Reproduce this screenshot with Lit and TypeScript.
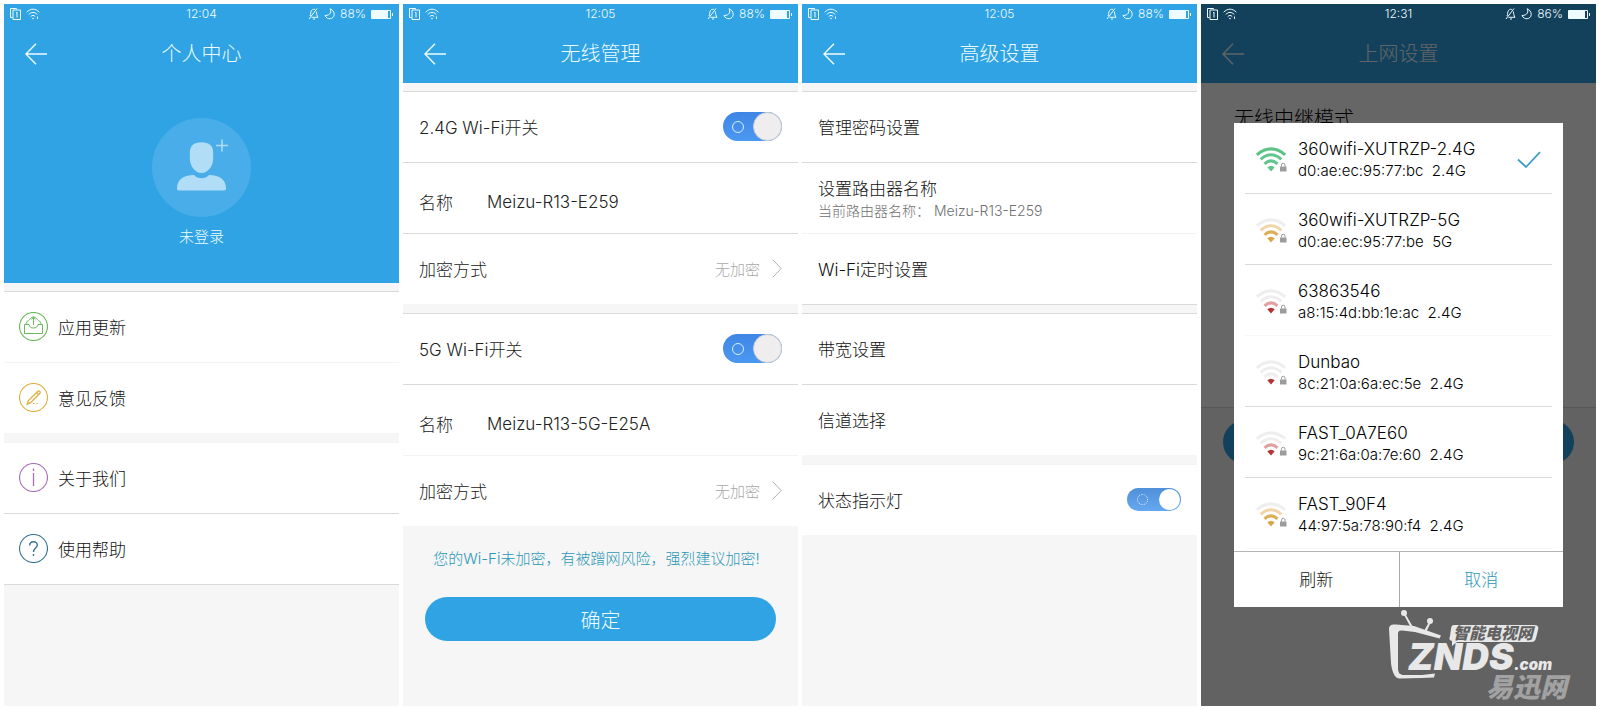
import { LitElement, html, svg, css, nothing, type TemplateResult } from "lit";
import { customElement, property } from "lit/decorators.js";
import { classMap } from "lit/directives/class-map.js";

const backArrow = svg`<path d="M11 .8 1 11l10 10.2M1 11h21" fill="none" stroke="currentColor" stroke-width="1.4"/>`;

@customElement("status-bar")
class StatusBar extends LitElement {
  @property() time = "";
  @property({ type: Number }) battery = 100;

  static styles = css`
    :host {
      display: grid;
      grid-template-columns: 1fr auto 1fr;
      align-items: center;
      height: 20px;
      padding: 0 6px 0 6px;
      font-size: 12px;
      line-height: 20px;
    }
    .side {
      display: flex;
      align-items: center;
      gap: 5px;
    }
    .right {
      justify-content: flex-end;
    }
    svg {
      display: block;
      fill: none;
      stroke: currentColor;
    }
  `;

  render() {
    return html`
      <div class="side">
        <svg width="11" height="12" viewBox="0 0 11 12" aria-hidden="true">
          <path d="M2.5 9.5h-2v-9h6v1M3 2h7.500v9.500H3zM6 5l1-.8V9.500" />
        </svg>
        <svg width="14" height="12" viewBox="0 0 14 12" aria-hidden="true">
          <path d="M.7 4.200C4.500.2 9.500.2 13.300 4.200M2.700 6.500C5.500 3.700 8.500 3.700 11.300 6.500M4.700 8.700C6.300 7 7.700 7 9.300 8.700" />
          <circle cx="7" cy="10.500" r=".8" fill="currentColor" stroke="none" />
          <path d="M11.500 8.500v2.500" />
        </svg>
      </div>
      <span>${this.time}</span>
      <div class="side right">
        <svg width="11" height="12" viewBox="0 0 11 12" aria-hidden="true">
          <path d="M9 .5 1 11M2 8C3 6.500 2.300 4 3.500 2.500S6 1.300 7 1.500M8.300 3.500C8.700 6 8.800 7.500 10 9.300H3.500M5 11h2" />
        </svg>
        <svg width="11" height="12" viewBox="0 0 11 12" aria-hidden="true">
          <path d="M6 .8c2 2.700.5 6.700-5 6.700C3 12.300 9.800 11.500 10.200 6.700 10.300 3.800 8.500 1.500 6 .8z" />
        </svg>
        <span>${this.battery}%</span>
        <svg width="22" height="9" viewBox="0 0 22 9" aria-hidden="true">
          <path d="M.5.500h19v8H.500zM21.500 3v3" />
          <path d="M1 1h16v7H1z" fill="currentColor" stroke="none" />
        </svg>
      </div>
    `;
  }
}

interface Network {
  name: string;
  mac: string;
  band: string;
  level: number;
}

const networks: Network[] = [
  { name: "360wifi-XUTRZP-2.4G", mac: "d0:ae:ec:95:77:bc", band: "2.4G", level: 4 },
  { name: "360wifi-XUTRZP-5G", mac: "d0:ae:ec:95:77:be", band: "5G", level: 3 },
  { name: "63863546", mac: "a8:15:4d:bb:1e:ac", band: "2.4G", level: 2 },
  { name: "Dunbao", mac: "8c:21:0a:6a:ec:5e", band: "2.4G", level: 1 },
  { name: "FAST_0A7E60", mac: "9c:21:6a:0a:7e:60", band: "2.4G", level: 2 },
  { name: "FAST_90F4", mac: "44:97:5a:78:90:f4", band: "2.4G", level: 3 },
];

/* Colours of the dot and of the three arcs, from the inside out. */
const signalColours: Record<number, string[]> = {
  1: ["#b23434", "#eeeeee", "#eeeeee", "#eeeeee"],
  2: ["#b23434", "#e0a0a0", "#eeeeee", "#eeeeee"],
  3: ["#d9a648", "#dcae58", "#f1d5a8", "#eeeeee"],
  4: ["#62c58c", "#62c58c", "#62c58c", "#5cc386"],
};

const signalIcon = (level: number) => {
  const c = signalColours[level];
  return html`<svg class="signal" width="31" height="25" viewBox="0 0 31 25" fill="none" aria-hidden="true">
    <path d="M.9 7.800Q15-4 29.100 7.800" stroke=${c[3]} stroke-width="3" />
    <path d="M4.700 12.300Q15 3.300 25.300 12.300" stroke=${c[2]} stroke-width="3" />
    <path d="M8.500 16.800Q15 11 21.500 16.800" stroke=${c[1]} stroke-width="3" />
    <path d="M11.300 20.300Q15 17.300 18.700 20.300L15 24.500z" fill=${c[0]} />
    <rect x="24" y="19.500" width="6.500" height="5" fill="#9c9c9c" />
    <path d="M25.500 19.500v-1.500a1.750 1.750 0 0 1 3.500 0v1.500" stroke="#9c9c9c" />
  </svg>`;
};

@customElement("app-root")
class AppRoot extends LitElement {
  static styles = css`
    :host {
      display: block;
      font-family: Inter, "Noto Sans CJK SC", sans-serif;
      font-weight: 300;
      color: #111;
      --blue: #30a3e5;
      --line: #d9d9d9;
      --faint: #f3f3f3;
    }
    * {
      box-sizing: border-box;
    }
    button,
    input {
      font: inherit;
      color: inherit;
      margin: 0;
      padding: 0;
      border: 0;
      background: none;
    }
    a {
      color: inherit;
      text-decoration: none;
    }
    svg {
      display: block;
      flex: none;
    }
    .board {
      display: grid;
      grid-template-columns: repeat(4, minmax(0, 1fr));
      gap: 4px;
      min-height: 100vh;
      padding: 4px;
      background: #fff;
    }
    .phone {
      position: relative;
      display: flex;
      flex-direction: column;
      background: #f6f6f6;
    }
    .top {
      background: var(--blue);
      color: #eefcff;
    }
    .top status-bar {
      position: relative;
      z-index: 2;
    }
    .bar {
      display: grid;
      grid-template-columns: 1fr auto 1fr;
      align-items: center;
      height: 59px;
    }
    .back {
      justify-self: start;
      margin-left: 21px;
      cursor: pointer;
    }
    h1 {
      margin: 0;
      font-size: 20px;
      line-height: 30px;
      font-weight: 300;
    }
    .profile {
      display: flex;
      flex-direction: column;
      align-items: center;
      gap: 10px;
      padding: 35px 0 36px;
      font-size: 15px;
      line-height: 20px;
    }
    .group {
      margin-top: 9px;
      background: #fff;
      font-size: 17px;
    }
    .top + .group {
      margin-top: 8px;
    }
    .row {
      display: flex;
      align-items: center;
      justify-content: space-between;
      height: 71px;
      padding: 0 16px 2px;
      border-top: 1px solid var(--line);
    }
    .row.faint {
      border-top-color: var(--faint);
    }
    .row.menu {
      justify-content: flex-start;
      gap: 10px;
      padding: 0 15px 2px;
    }
    .row.field {
      justify-content: flex-start;
      gap: 34px;
      padding: 7px 16px 0;
    }
    .field input {
      flex: 1;
      min-width: 0;
    }
    .closed {
      box-shadow: 0 1px var(--line);
    }
    .stack {
      display: flex;
      flex-direction: column;
      line-height: 22px;
    }
    .row .stack {
      padding-top: 5px;
    }
    .sub {
      font-size: 14px;
      color: #707070;
      white-space: pre;
    }
    .dim {
      color: #222;
    }
    .choice {
      display: flex;
      align-items: center;
      gap: 12px;
      font-size: 15px;
      color: #a8a8a8;
    }
    .switch {
      appearance: none;
      position: relative;
      width: 59px;
      height: 29px;
      border-radius: 15px;
      background: linear-gradient(#3f86e4, #4b98f2);
      cursor: pointer;
    }
    .switch::before {
      content: "";
      position: absolute;
      left: 9px;
      top: 9px;
      width: 12px;
      height: 12px;
      box-sizing: border-box;
      border: 1px solid #d5f1ff;
      border-radius: 50%;
    }
    .switch::after {
      content: "";
      position: absolute;
      right: 0;
      top: 0;
      width: 29px;
      height: 29px;
      box-sizing: border-box;
      border: 1px solid #d0cdcf;
      border-radius: 50%;
      background: #efedee;
    }
    .switch.small {
      width: 54px;
      height: 23px;
      background: linear-gradient(#4f90d8, #66a8f0);
    }
    .switch.small::before {
      left: 10px;
      top: 6px;
      width: 11px;
      height: 11px;
      border: 1px dotted #d5ecff;
    }
    .switch.small::after {
      right: 1px;
      top: 1px;
      width: 21px;
      height: 21px;
      border: 0;
      background: #fff;
    }
    .note {
      margin: 22px 0 27px;
      padding-right: 8px;
      text-align: center;
      font-size: 15px;
      line-height: 22px;
      color: #2b98b6;
    }
    .confirm {
      height: 44px;
      margin: 0 22px;
      border-radius: 22px;
      background: var(--blue);
      color: #eefcff;
      font-size: 20px;
      cursor: pointer;
    }
    .mode {
      height: 325px;
      margin: 0;
      padding: 21px 33px 0;
      background: #fff;
      border-bottom: 1px solid var(--line);
      font-size: 20px;
      line-height: 30px;
      color: #000;
    }
    .mode + .confirm {
      margin-top: 12px;
    }
    .shade {
      position: absolute;
      inset: 0;
      padding: 119px 33px 0;
      background: rgba(0, 0, 0, 0.6);
    }
    .dialog {
      background: #fff;
      color: #000;
    }
    .list {
      margin: 0;
      padding: 0 11px 2px;
      border: 0;
    }
    .net {
      display: flex;
      align-items: center;
      gap: 11px;
      height: 71px;
      padding: 3px 11px 0;
      border-bottom: 1px solid var(--line);
      cursor: pointer;
    }
    .net.soft {
      border-bottom-color: #f8f8f8;
    }
    .net input {
      appearance: none;
      width: 0;
      height: 0;
      margin-right: -11px;
    }
    .net .stack {
      flex: 1;
      font-size: 17px;
    }
    .net .mac {
      font-size: 15px;
      white-space: pre;
    }
    .actions {
      display: grid;
      grid-template-columns: 1fr 1fr;
      border-top: 1px solid #b5b5b5;
    }
    .actions button {
      height: 55px;
      padding-bottom: 2px;
      font-size: 17px;
      color: #111;
      cursor: pointer;
    }
    .actions button + button {
      border-left: 1px solid #a8a8a8;
      color: #2b98b6;
    }
    .mark {
      position: absolute;
      right: 24px;
      bottom: 2px;
    }
    .mark text {
      font-weight: 900;
      font-style: italic;
    }
  `;

  private header(title: string, time: string, battery: number, extra: unknown = nothing) {
    return html`<header class="top">
      <status-bar .time=${time} .battery=${battery}></status-bar>
      <div class="bar">
        <button class="back" aria-label="返回">
          <svg width="22" height="22" viewBox="0 0 22 22">${backArrow}</svg>
        </button>
        <h1>${title}</h1>
      </div>
      ${extra}
    </header>`;
  }

  private menuRow(label: string, colour: string, glyph: TemplateResult<2>, faint = false) {
    return html`<a href="#" class=${classMap({ row: true, menu: true, faint })}>
      <svg width="29" height="29" viewBox="0 0 29 29" fill="none" stroke=${colour} aria-hidden="true">
        <circle cx="14.500" cy="14.500" r="14" stroke-width="1.200" />
        ${glyph}
      </svg>
      ${label}
    </a>`;
  }

  private personal() {
    return html`<section class="phone">
      ${this.header(
        "个人中心",
        "12:04",
        88,
        html`<div class="profile">
          <svg width="99" height="99" viewBox="0 0 99 99" aria-hidden="true">
            <circle cx="49.500" cy="49.500" r="49.500" fill="#48ade8" />
            <path
              d="M49.500 24.200c8 0 11.700 4 11.700 10.500v5.300c0 8-5 15-11.700 15S37.800 48 37.800 40v-5.300c0-6.500 3.700-10.500 11.700-10.500z"
              fill="#b1ddf6"
            />
            <path d="M42 57c4 4.300 11 4.300 15 0 11 0 17 5 17 13.500 0 1.300-.5 2-2 2H27c-1.500 0-2-.7-2-2C25 62 31 57 42 57z" fill="#b1ddf6" />
            <path d="M70 21.500v12M64 27.500h12" stroke="#b1ddf6" stroke-width="1.500" />
          </svg>
          <span>未登录</span>
        </div>`
      )}
      <nav class="group">
        ${this.menuRow(
          "应用更新",
          "#6bb85a",
          svg`<path d="M5.500 21.500v-9h4.500c.5 2.500 2 3.500 4.500 3.500s4-1 4.500-3.500h4.500v9zM6.500 12.500l2-3.500c1.500 0 1.500-1.500 3-2.500l3-2 3 2c1.500 1 1.500 2.500 3 2.500l2 3.500M14.500 13V5.500M12.300 7.500l2.200-2.200 2.200 2.200"/>`
        )}
        ${this.menuRow(
          "意见反馈",
          "#dfb042",
          svg`<path d="M8.200 21.200l1-3.400L18.800 8.200c1.300-1.100 3.200.7 2.100 2.100l-9.400 9.400zM17.600 9.400l2.100 2.200" stroke-width="1.300"/><path d="M14 20.500h1.500M17.500 20.500H19"/>`,
          true
        )}
      </nav>
      <nav class="group closed">
        ${this.menuRow("关于我们", "#a86fb8", svg`<path d="M14.500 5.500v2.500M14.500 10v13" stroke-width="1.300"/>`, true)}
        ${this.menuRow(
          "使用帮助",
          "#3a7491",
          svg`<path d="M10.700 11.500c0-5 7.600-5 7.600-.5 0 3-3.800 3.300-3.800 7M14.500 20v2" stroke-width="1.400"/>`
        )}
      </nav>
    </section>`;
  }

  private wifiGroup(id: string, band: string, name: string, faint: boolean) {
    return html`<div class="group dim">
      <label class="row">
        ${band} Wi-Fi开关
        <input class="switch" type="checkbox" role="switch" checked />
      </label>
      <div class="row field">
        <label for=${id}>名称</label>
        <input id=${id} type="text" .value=${name} />
      </div>
      <a href="#" class=${classMap({ row: true, faint })}>
        加密方式
        <span class="choice">
          无加密
          <svg width="10" height="19" viewBox="0 0 10 19" fill="none" stroke="#b0b0b0" aria-hidden="true">
            <path d="M.8.800 9.200 9.500.8 18.200" />
          </svg>
        </span>
      </a>
    </div>`;
  }

  private wireless() {
    return html`<section class="phone">
      ${this.header("无线管理", "12:05", 88)}
      ${this.wifiGroup("name24", "2.4G", "Meizu-R13-E259", false)}
      ${this.wifiGroup("name5", "5G", "Meizu-R13-5G-E25A", true)}
      <p class="note">您的Wi-Fi未加密，有被蹭网风险，强烈建议加密!</p>
      <button class="confirm">确定</button>
    </section>`;
  }

  private advanced() {
    return html`<section class="phone">
      ${this.header("高级设置", "12:05", 88)}
      <nav class="group closed">
        <a href="#" class="row">管理密码设置</a>
        <a href="#" class="row">
          <span class="stack">
            <span>设置路由器名称</span>
            <span class="sub">当前路由器名称： Meizu-R13-E259</span>
          </span>
        </a>
        <a href="#" class="row faint">Wi-Fi定时设置</a>
      </nav>
      <nav class="group">
        <a href="#" class="row">带宽设置</a>
        <a href="#" class="row">信道选择</a>
      </nav>
      <div class="group">
        <label class="row faint">
          状态指示灯
          <input class="switch small" type="checkbox" role="switch" checked />
        </label>
      </div>
    </section>`;
  }

  private network(n: Network, i: number) {
    const soft = i === 2 || i === networks.length - 1;
    return html`<label class=${classMap({ net: true, soft })}>
      <input type="radio" name="network" ?checked=${i === 0} />
      ${signalIcon(n.level)}
      <span class="stack">
        <span>${n.name}</span>
        <span class="mac">${n.mac}  ${n.band}</span>
      </span>
      ${i === 0
        ? html`<svg width="24" height="18" viewBox="0 0 24 18" fill="none" stroke="#3f9fc4" stroke-width="1.800" aria-hidden="true">
            <path d="M1 8.500 9 16 23 1.200" />
          </svg>`
        : nothing}
    </label>`;
  }

  private internet() {
    return html`<section class="phone">
      ${this.header("上网设置", "12:31", 86)}
      <p class="mode">无线中继模式</p>
      <button class="confirm" aria-label="连接"></button>
      <div class="shade">
        <div class="dialog" role="dialog" aria-label="无线网络">
          <fieldset class="list">${networks.map((n, i) => this.network(n, i))}</fieldset>
          <div class="actions">
            <button>刷新</button>
            <button>取消</button>
          </div>
        </div>
      </div>
      <svg class="mark" width="187" height="96" viewBox="0 0 187 96">
        <g fill="#e8e8e8" stroke="none">
          <path
            d="M4 21C4 17 7 16 11 16.500l18 1.500 27 9.500-1.500 3L30 24l-13-1.500c-3-.3-4 1-4 3.500v34c0 5 2 7 6 7h18l13-1.500-1 4L37 70l-22 .500C10 71 7 64 6 55z"
          />
          <circle cx="19" cy="5" r="3" />
          <circle cx="45" cy="13" r="3" />
          <path d="M18.500 6 26 20h2.500L20 5zM44 14l-5 9 2.500.500L46 14z" />
          <path d="M69 17h80c4 0 5 2 4 5l-2 8c-1 3-2 4-5 4H72l-5 4v-5c-3-1-3-2-2-5l1-7c.5-3 1-4 3-4z" />
        </g>
        <text x="23" y="62" font-size="37" fill="#e8e8e8">ZNDS</text>
        <text x="129" y="62" font-size="15" fill="#e8e8e8">.com</text>
        <text x="68" y="31" font-size="16" fill="#626262">智能电视网</text>
        <text x="101" y="89" font-size="27" fill="#a2a2a2">易迅网</text>
      </svg>
    </section>`;
  }

  render() {
    return html`<main class="board">
      ${this.personal()} ${this.wireless()} ${this.advanced()} ${this.internet()}
    </main>`;
  }
}
